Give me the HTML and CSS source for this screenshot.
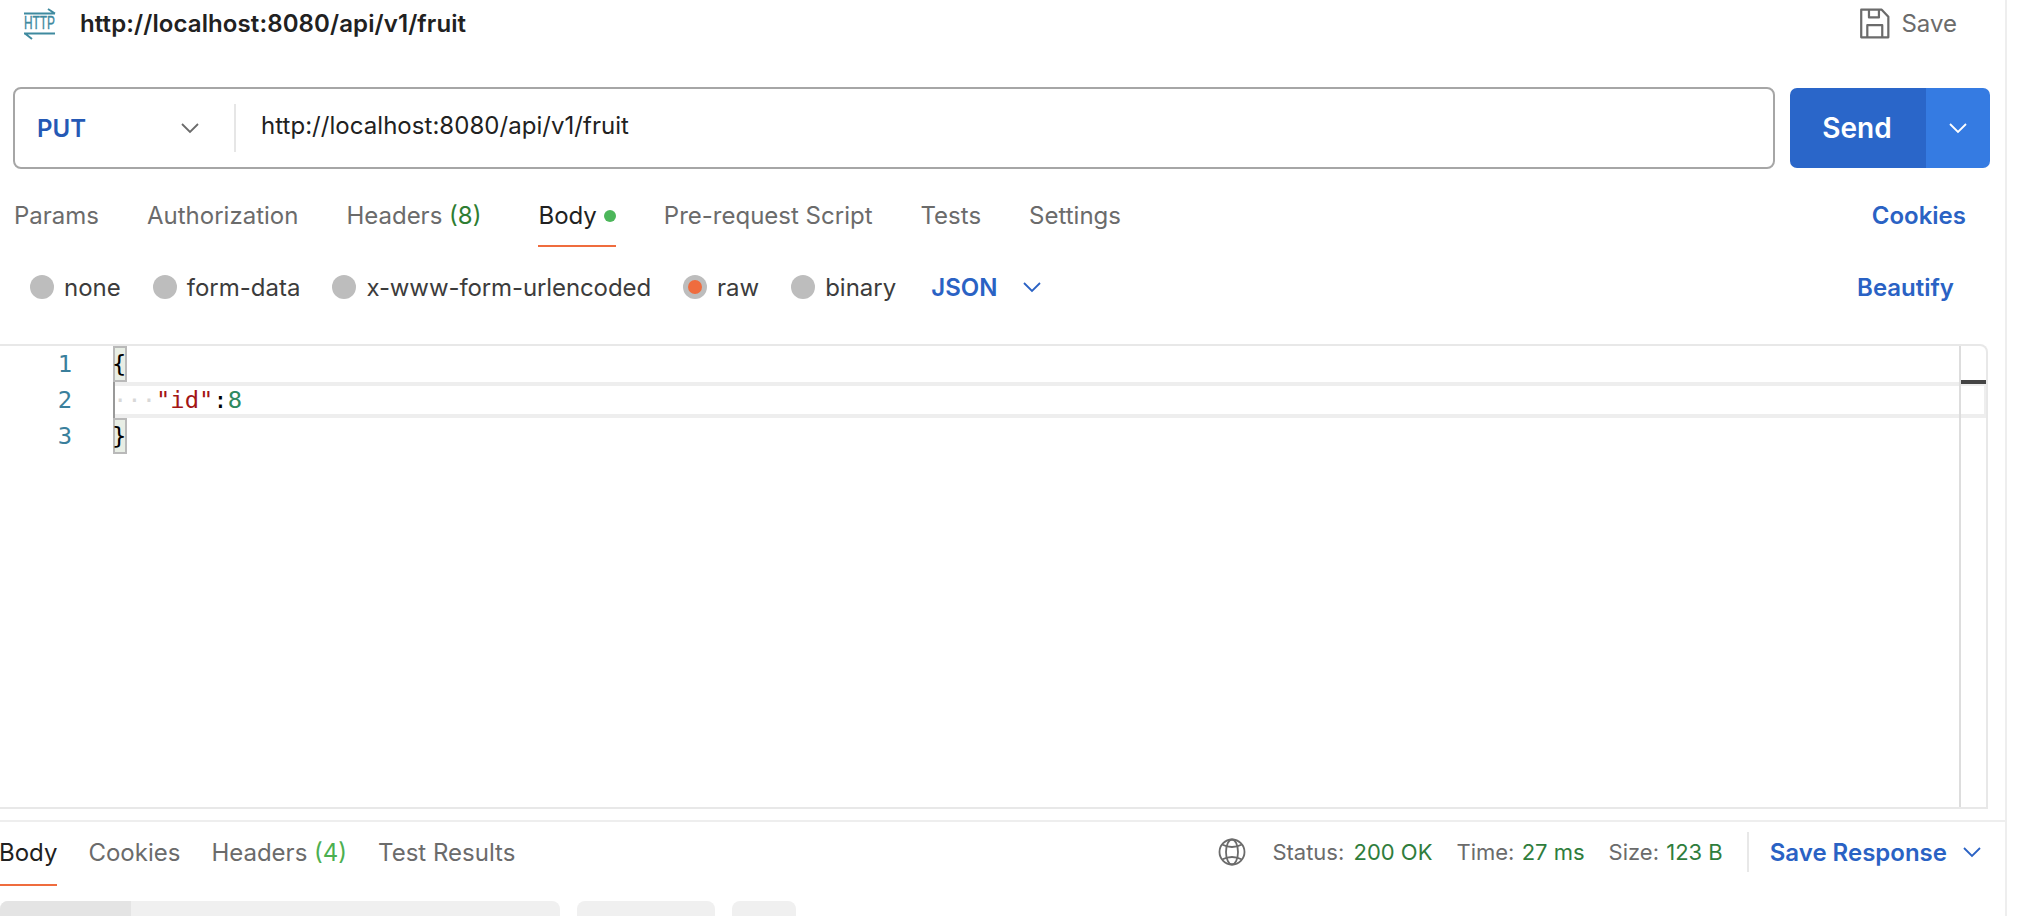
FILE: index.html
```html
<!DOCTYPE html>
<html lang="en">
<head>
<meta charset="utf-8">
<title>PUT fruit</title>
<link rel="stylesheet" href="styles.css">
</head>
<body>
<main class="app">
  <header class="title-row">
    <svg class="http-icon" width="34" height="32" viewBox="0 0 34 32" aria-hidden="true">
      <path d="M1 5.500H32M25 1l7 4.500M1 25.500H32M2 25.500l7 5.500" fill="none" stroke="#3f8a9f" stroke-width="2"/>
      <text transform="translate(1 21) scale(.66 1)" class="http-text">HTTP</text>
    </svg>
    <h1 class="title">http://localhost:8080/api/v1/fruit</h1>
    <div class="save">
      <svg width="31" height="31" viewBox="0 0 28 28" aria-hidden="true">
        <path d="M2 1.500H20.500L26.500 8V26.500H2ZM9 1.500V8.500H18V1.500M7.500 26.500V15.500H21V26.500" fill="none" stroke="#6b6b6b" stroke-width="2" stroke-linejoin="round"/>
      </svg>
      <span>Save</span>
    </div>
  </header>

  <section class="url-row">
    <div class="url-box">
      <div class="method"><span>PUT</span>
        <svg class="chev" width="18" height="12" viewBox="0 0 18 12" aria-hidden="true"><path d="M1 2l8 8 8-8" fill="none" stroke="#6b6b6b" stroke-width="1.800"/></svg>
      </div>
      <div class="url-text">http://localhost:8080/api/v1/fruit</div>
    </div>
    <div class="send">
      <div class="send-main">Send</div>
      <div class="send-more"><svg width="18" height="12" viewBox="0 0 18 12" aria-hidden="true"><path d="M1 2l8 8 8-8" fill="none" stroke="#fff" stroke-width="1.800"/></svg></div>
    </div>
  </section>

  <nav class="req-tabs">
    <span class="tab">Params</span>
    <span class="tab">Authorization</span>
    <span class="tab before-body">Headers&nbsp;<em class="count">(8)</em></span>
    <span class="tab active">Body<i class="dot"></i></span>
    <span class="tab">Pre-request Script</span>
    <span class="tab">Tests</span>
    <span class="tab">Settings</span>
    <span class="tab-link">Cookies</span>
  </nav>

  <div class="body-types">
    <label class="radio"><i class="rad"></i>none</label>
    <label class="radio"><i class="rad"></i>form-data</label>
    <label class="radio"><i class="rad"></i><span class="long">x-www-form-urlencoded</span></label>
    <label class="radio"><i class="rad on"></i>raw</label>
    <label class="radio"><i class="rad"></i>binary</label>
    <span class="json">JSON
      <svg width="18" height="12" viewBox="0 0 18 12" aria-hidden="true"><path d="M1 2l8 8 8-8" fill="none" stroke="#2a62c4" stroke-width="1.800"/></svg>
    </span>
    <span class="beautify">Beautify</span>
  </div>

  <section class="editor">
    <div class="line"><span class="num">1</span><span class="code"><b class="brace">{</b></span></div>
    <div class="line current"><span class="num">2</span><span class="code"><span class="ws">···</span><span class="key">"id"</span>:<span class="val">8</span></span></div>
    <div class="line"><span class="num">3</span><span class="code"><b class="brace">}</b></span></div>
    <div class="ruler"><i class="mark"></i></div>
  </section>

  <section class="resp-bar">
    <nav class="resp-tabs">
      <span class="tab active flush">Body</span>
      <span class="tab">Cookies</span>
      <span class="tab">Headers&nbsp;<em class="count light">(4)</em></span>
      <span class="tab">Test Results</span>
    </nav>
    <div class="stats">
      <svg class="globe" width="28" height="28" viewBox="0 0 28 28" aria-hidden="true">
        <g fill="none" stroke="#6b6b6b" stroke-width="1.800"><circle cx="14" cy="14" r="12.500"/><ellipse cx="14" cy="14" rx="6" ry="12.500"/><path d="M4 6.500Q14 11.500 24 6.500M4 21.500Q14 16.500 24 21.500"/></g>
      </svg>
      <span class="stat first">Status: <em>200 OK</em></span>
      <span class="stat">Time: <em>27 ms</em></span>
      <span class="stat">Size: <em>123 B</em></span>
      <span class="save-resp">Save Response
        <svg width="18" height="12" viewBox="0 0 18 12" aria-hidden="true"><path d="M1 2l8 8 8-8" fill="none" stroke="#2a62c4" stroke-width="1.800"/></svg>
      </span>
    </div>
  </section>

  <div class="resp-tools">
    <div class="seg"><i class="seg-on"></i></div>
    <div class="pill wide"></div>
    <div class="pill"></div>
  </div>
</main>
</body>
</html>
```
FILE: styles.css
```css
* { box-sizing: border-box; }
html, body { margin: 0; height: 100%; background: #fff; }
body { width: 2034px; height: 916px; overflow: hidden; font-family: Inter, "Liberation Sans", sans-serif; color: #212121; }
em { font-style: normal; }
.app { width: 2007px; height: 916px; border-right: 2px solid #eee; display: flex; flex-direction: column; overflow: hidden; }

.title-row { height: 47px; display: flex; align-items: center; padding: 0 48px 0 23px; flex: none; }
.http-icon { flex: none; margin-top: 1px; overflow: visible; }
.http-text { font: 18px "Liberation Sans", sans-serif; fill: #3f8a9f; stroke: #3f8a9f; stroke-width: .4; }
.title { margin: 0 0 0 23px; font-size: 24px; font-weight: 600; line-height: 47px; letter-spacing: .1px; flex: 1; }
.save { display: flex; align-items: center; gap: 11px; color: #6b6b6b; font-size: 24px; }

.url-row { display: flex; flex: none; gap: 15px; margin: 40px 15px 0 13px; height: 82px; }
.url-box { flex: 1; border: 2px solid #a6a6a6; border-radius: 8px; display: flex; align-items: center; }
.method { width: 221px; height: 48px; border-right: 2px solid #e6e6e6; display: flex; align-items: center; justify-content: space-between; padding: 0 35px 0 22px; color: #2559b5; font-size: 24px; font-weight: 600; }
.url-text { padding: 0 0 6px 25px; font-size: 24px; letter-spacing: .04px; }
.send { width: 200px; height: 80px; margin-top: 1px; display: flex; border-radius: 7px; overflow: hidden; color: #fff; }
.send-main { width: 136px; background: #2a66c9; display: flex; align-items: center; justify-content: center; font-size: 28px; font-weight: 600; padding-right: 2px; }
.send-more { flex: 1; background: #357be2; display: flex; align-items: center; justify-content: center; }

.req-tabs { height: 78px; flex: none; display: flex; gap: 48px; padding: 0 39px 0 14px; align-items: stretch; }
.tab { color: #6b6b6b; font-size: 24px; display: flex; align-items: center; position: relative; white-space: pre; }
.req-tabs .tab { padding-top: 15px; }
.before-body { margin-right: 9px; }
.tab.active { color: #212121; }
.tab.active::after { content: ""; position: absolute; left: 0; right: 0; bottom: 0; height: 2px; background: #ef6c3e; }
.count { color: #2e7d32; }
.count.light { color: #4caf50; }
.dot { width: 12px; height: 12px; margin-left: 7px; border-radius: 50%; background: #4cb65a; }
.tab-link { margin-left: auto; padding-top: 15px; color: #2a62c4; font-size: 24px; font-weight: 600; align-self: center; }

.body-types { height: 97px; flex: none; display: flex; align-items: center; padding: 0 51px 17px 30px; font-size: 24px; gap: 32px; }
.radio { display: flex; align-items: center; gap: 10px; color: #3c3c3c; }
.long { letter-spacing: -.1px; }
.rad { width: 24px; height: 24px; border-radius: 50%; background: #bdbdbd; display: flex; align-items: center; justify-content: center; }
.rad.on::after { content: ""; width: 14px; height: 14px; border-radius: 50%; background: #ef6c3e; }
.json { color: #2a62c4; font-weight: 600; display: flex; align-items: center; gap: 26px; margin-left: 3px; }
.beautify { margin-left: auto; color: #2a62c4; font-weight: 600; }

.editor { position: relative; flex: none; width: 1988px; height: 465px; border-top: 2px solid #e8e8e8; border-right: 2px solid #e8e8e8; border-bottom: 2px solid #e8e8e8; border-top-right-radius: 8px; font-family: "DejaVu Sans Mono", "Liberation Mono", monospace; font-size: 23.800px; }
.line { height: 36px; display: flex; align-items: center; color: #000; }
.num { width: 113px; flex: none; padding-right: 41px; text-align: right; color: #3a7f9c; }
.code { flex: 1; height: 36px; line-height: 36px; white-space: pre; }
.current .code { position: relative; border: 4px solid #eee; border-left: 0; border-right-width: 2px; line-height: 28px; }
.current .code::before { content: ""; position: absolute; left: 0; top: -4px; bottom: -4px; width: 2px; background: #999; }
.brace { display: inline-block; width: 14px; height: 36px; line-height: 32px; border: 2px solid #b9b9b9; background: #e8eee5; font-weight: 400; text-indent: -3px; }
.ws { color: #d8d8d8; }
.key { color: #a31515; }
.val { color: #2f8a5f; }
.ruler { position: absolute; top: 0; bottom: 0; right: 0; width: 27px; border-left: 2px solid #ddd; }
.mark { position: absolute; left: 0; right: 0; top: 34px; height: 4px; background: #444; }

.resp-bar { margin-top: 11px; height: 66px; flex: none; border-top: 2px solid #eee; display: flex; justify-content: space-between; }
.resp-tabs { display: flex; gap: 31px; }
.resp-tabs .tab { height: 64px; padding-bottom: 4px; }
.tab.flush { margin-left: -1px; }
.stats { display: flex; align-items: center; font-size: 22px; color: #6b6b6b; padding: 0 24px 4px 0; }
.globe { margin-right: 26px; }
.stat { margin-right: 24px; }
.stat em { color: #2f7d3c; margin-left: 1px; }
.stat.first em { margin-left: 3px; }
.save-resp { border-left: 2px solid #e8e8e8; height: 40px; display: flex; align-items: center; gap: 16px; padding-left: 21px; color: #2a62c4; font-size: 24px; font-weight: 600; }

.resp-tools { display: flex; gap: 17px; margin-top: 15px; flex: 1; }
.seg { width: 560px; background: #f0f0f0; border-radius: 8px 8px 0 0; overflow: hidden; }
.seg-on { display: block; width: 131px; height: 100%; background: #e4e4e4; }
.pill { width: 64px; background: #f0f0f0; border-radius: 8px 8px 0 0; }
.pill.wide { width: 138px; }
```
